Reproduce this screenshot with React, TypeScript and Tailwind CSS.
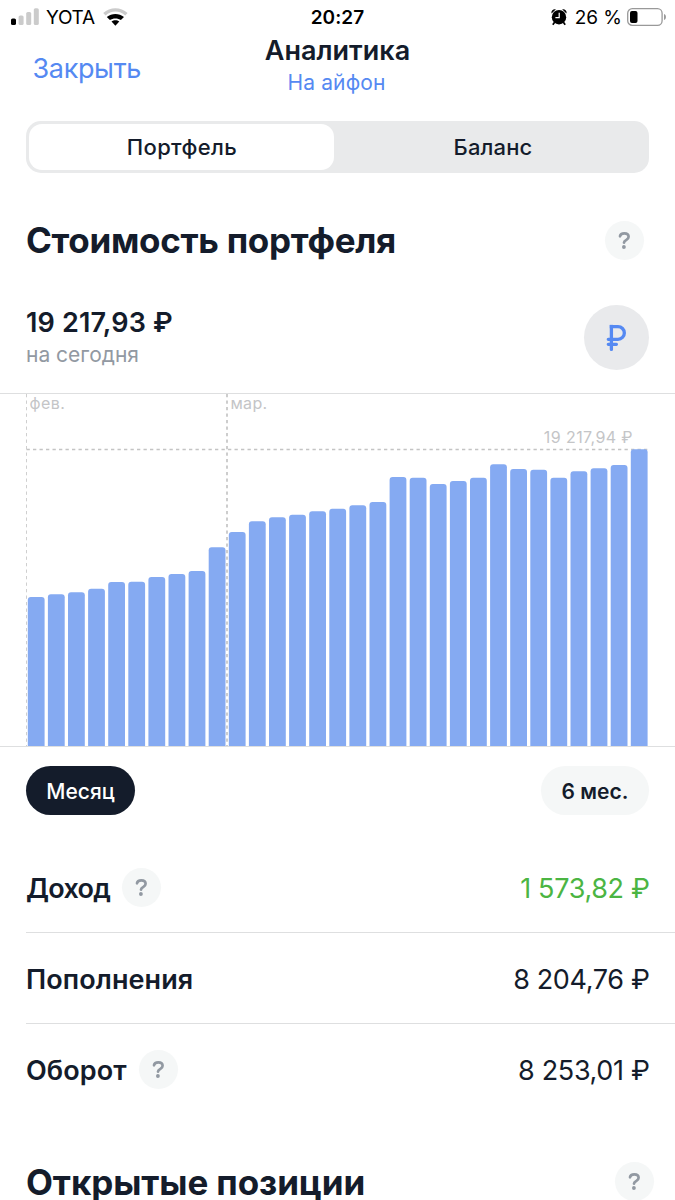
import React from 'react';

const INK = '#141c2b';

const TOPS = [
  597, 594.3, 592.3, 588.7, 582, 581.7, 577, 574, 571, 547.3, 532, 521.3, 517.3, 514.7, 511.3, 508.7,
  505.3, 502, 477, 477.7, 484, 481, 477.7, 464.3, 469, 469.7, 477.7, 471.3, 468.3, 465, 449.3,
];

function Help({ className = '' }: { className?: string }) {
  return (
    <span
      className={
        'flex h-[39px] w-[39px] shrink-0 items-center justify-center rounded-full bg-[#f5f7f7] text-[#9299a2] ' +
        className
      }
    >
      <svg width="39" height="39" viewBox="0 0 39 39" fill="none">
        <path
          d="M15 15.3C15.3 13.3 17 12.3 19.3 12.3C21.9 12.3 23.6 13.6 23.6 15.7C23.6 17.2 22.8 18 21.4 18.9C19.9 19.8 19.1 20.4 19 21.7"
          stroke="currentColor"
          strokeWidth="2.7"
          strokeLinecap="round"
        />
        <circle cx="18.9" cy="26" r="1.9" fill="currentColor" />
      </svg>
    </span>
  );
}

function StatusBar() {
  return (
    <div className="grid h-[34px] grid-cols-[1fr_auto_1fr] items-center text-black">
      <div className="flex items-center pl-[11px]">
        <svg width="28" height="18" viewBox="0 0 28 18">
          <rect x="0" y="10.5" width="5" height="6.5" rx="1.6" fill="#000" />
          <rect x="7.6" y="7.5" width="5" height="9.5" rx="1.6" fill="#cbcbcb" />
          <rect x="15.2" y="4" width="5" height="13" rx="1.6" fill="#cbcbcb" />
          <rect x="22.8" y="0.2" width="5" height="16.8" rx="1.6" fill="#cbcbcb" />
        </svg>
        <span className="ml-[7px] text-[19px] leading-none tracking-[-0.3px]">YOTA</span>
        <svg className="ml-[8px]" width="25" height="18" viewBox="0 0 25 18">
          <path d="M0.2 5C7 -1.4 17.8 -1.4 24.6 5L22.2 7.5C16.8 2.3 8 2.3 2.6 7.5Z" fill="#cbcbcb" />
          <path d="M3.8 9C8.8 4.9 16 4.9 21 9L17.9 12.1C15 9.8 9.8 9.8 6.9 12.1Z" fill="#000" />
          <path d="M8.5 13.6C10.8 11.7 14 11.7 16.3 13.6L12.4 17.7Z" fill="#000" />
        </svg>
      </div>
      <div className="text-[19px] font-semibold leading-none tracking-[0.1px]">20:27</div>
      <div className="flex items-center justify-end pr-[8px]">
        <svg width="16" height="18" viewBox="0 0 16 18">
          <circle cx="8" cy="9.2" r="7.2" fill="#000" />
          <path d="M0.6 5.4C-0.3 2.8 2 0.6 4.9 1.3ZM15.4 5.4C16.3 2.8 14 0.6 11.1 1.3Z" fill="#000" />
          <path d="M3.6 14.2L1.8 16.8M12.4 14.2L14.2 16.8" stroke="#000" strokeWidth="1.7" />
          <path d="M8.2 4.7V9.6H4.4" stroke="#fff" strokeWidth="1.2" fill="none" />
        </svg>
        <span className="ml-[8px] text-[19px] leading-none">26 %</span>
        <svg className="ml-[5px]" width="40" height="18" viewBox="0 0 40 18">
          <rect x="0.7" y="0.7" width="34.4" height="16.6" rx="4.6" fill="none" stroke="#999" strokeWidth="1.3" />
          <rect x="3" y="3" width="7.5" height="12" rx="2" fill="#000" />
          <path d="M37 6C39.6 6.6 39.6 11.4 37 12Z" fill="#999" />
        </svg>
      </div>
    </div>
  );
}

function Chart() {
  return (
    <svg className="block" width="675" height="354" viewBox="0 393 675 354" fontFamily="Inter, sans-serif">
      <path d="M0 393.5H675M0 746.5H675" stroke="#dedfe0" />
      <path d="M26.5 394V746" stroke="#cfcfcf" strokeDasharray="3.3 3.2" />
      <path d="M227 394V746" stroke="#c8c8c8" strokeWidth="1.8" strokeDasharray="3.3 3.2" />
      <path d="M26.5 449.4H649" stroke="#c4c4c4" strokeWidth="1.5" strokeDasharray="3.3 3.2" />
      {TOPS.map((top, i) => {
        const x = 27.8 + i * 20.1;
        return (
          <path
            key={i}
            d={`M${x} 746V${top + 3}Q${x} ${top} ${x + 3} ${top}H${x + 13.8}Q${x + 16.8} ${top} ${x + 16.8} ${top + 3}V746Z`}
            fill="#85aaf2"
          />
        );
      })}
      <text x="29.5" y="408.6" fontSize="16" letterSpacing="0.45" fill="#c4c5c7">фев.</text>
      <text x="230.5" y="408.6" fontSize="16" letterSpacing="0.3" fill="#c4c5c7">мар.</text>
      <text x="633" y="442.6" fontSize="16" letterSpacing="0.4" textAnchor="end" fill="#c4c5c7">19 217,94 ₽</text>
    </svg>
  );
}

type RowProps = { label: string; tracking: string; value: string; help?: boolean; green?: boolean; last?: boolean };

function Row({ label, tracking, value, help, green, last }: RowProps) {
  return (
    <div
      className={
        'flex h-[91px] items-center justify-between border-b pr-[25.5px] text-[27px] leading-none ' +
        (last ? 'border-transparent' : 'border-[#dedfe0]')
      }
    >
      <div className="flex items-center">
        <span className={'pt-[2px] font-[560] ' + tracking}>{label}</span>
        {help && <Help className="ml-[12px]" />}
      </div>
      <span className={'pt-[2px] tracking-[-0.35px] ' + (green ? 'text-[#4bb543]' : '')}>{value}</span>
    </div>
  );
}

export default function App() {
  return (
    <main
      className="h-[1200px] w-[675px] overflow-hidden bg-white font-['Inter',sans-serif] whitespace-nowrap"
      style={{ color: INK }}
    >
      <StatusBar />
      <header className="grid h-[87px] grid-cols-[1fr_auto_1fr]">
        <button className="h-[70px] justify-self-start pl-[32.5px] text-[27px] leading-[70px] tracking-[-0.35px] text-[#5589f2]">
          Закрыть
        </button>
        <div className="pt-px text-center">
          <h1 className="text-[27px] font-semibold leading-[32px]">Аналитика</h1>
          <p className="pr-[2px] text-[21px] leading-[32px] tracking-[0.15px] text-[#5589f2]">На айфон</p>
        </div>
      </header>

      <div className="mx-[26px] flex h-[52px] rounded-[15px] bg-[#e9eaeb] py-[3px] pl-[3px] text-[22px] font-medium leading-[46px]">
        <button className="w-[305px] rounded-[13px] bg-white pl-px tracking-[0.35px]">Портфель</button>
        <button className="flex-1 pl-[3px] tracking-[0.15px]">Баланс</button>
      </div>

      <section className="mt-[48px] flex h-[39px] items-center justify-between pr-[31px] pl-[26px]">
        <h2 className="text-[35px] font-bold leading-none tracking-[-0.3px]">Стоимость портфеля</h2>
        <Help />
      </section>

      <section className="mt-[45px] flex h-[65px] justify-between px-[26px]">
        <div className="pt-px">
          <p className="text-[27px] font-semibold leading-[34px] tracking-[0.15px]">19 217,93 ₽</p>
          <p className="text-[21px] leading-[30px] text-[#9299a2]">на сегодня</p>
        </div>
        <button className="flex h-[65px] w-[65px] items-center justify-center rounded-full bg-[#e9eaec]">
          <svg width="65" height="65" viewBox="0 0 65 65" fill="none" stroke="#5589f2" strokeWidth="3.3" strokeLinecap="round">
            <path d="M27.4 44.4V21.6H34A6.35 6.35 0 0 1 34 34.3H24.3M24.3 39.3H32.4" />
            <path d="M27.4 21.6V21.5" strokeLinecap="square" />
          </svg>
        </button>
      </section>

      <div className="mt-[23px]">
        <Chart />
      </div>

      <div className="mt-[19px] flex h-[49px] justify-between px-[26px] text-[21px] leading-[47px]">
        <button className="w-[109px] rounded-full bg-[#141c2b] pt-[2px] font-medium text-white">Месяц</button>
        <button className="w-[108px] rounded-full bg-[#f5f7f7] pt-[2px] font-semibold">6 мес.</button>
      </div>

      <section className="mt-[27px] ml-[26px]">
        <Row label="Доход" tracking="tracking-[-0.7px]" value="1 573,82 ₽" help green />
        <Row label="Пополнения" tracking="tracking-[0.1px]" value="8 204,76 ₽" />
        <Row label="Оборот" tracking="tracking-[0.1px]" value="8 253,01 ₽" help last />
      </section>

      <section className="mt-[47px] flex h-[39px] items-center justify-between pr-[21px] pl-[26px]">
        <h2 className="pt-[2px] text-[35px] font-bold leading-none tracking-[-0.1px]">Открытые позиции</h2>
        <Help />
      </section>
    </main>
  );
}
